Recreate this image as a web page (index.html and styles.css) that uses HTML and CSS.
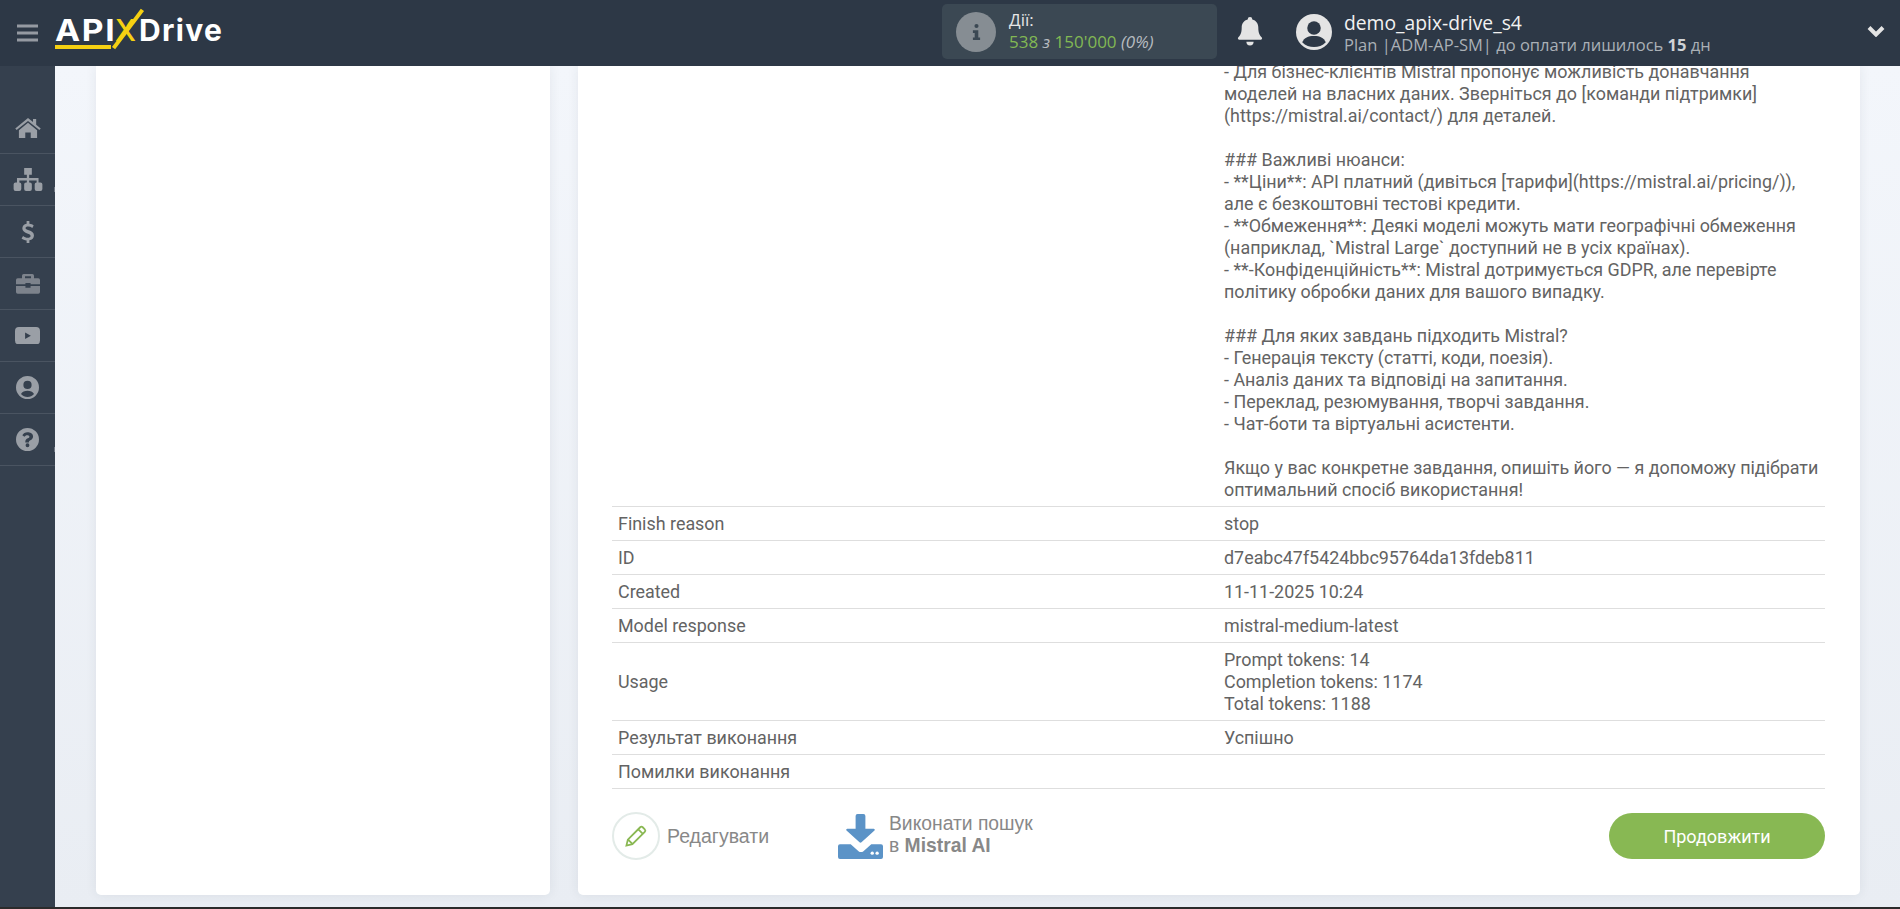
FILE: index.html
```html
<!DOCTYPE html>
<html lang="uk">
<head>
<meta charset="utf-8">
<title>ApiX-Drive</title>
<link rel="stylesheet" href="styles.css">
</head>
<body>
<header class="topbar">
  <div class="brand">
    <svg class="burger" viewBox="0 0 20 16"><path d="M0 0h20v2.800H0zM0 6.600h20v2.800H0zM0 13.200h20V16H0z"/></svg>
    <div class="logo"><span class="logo-api"><span class="logo-api-text">API</span></span><span class="logo-x">X</span><span class="logo-drive">Drive</span></div>
  </div>
  <div class="actions">
    <div class="actions-box">
      <span class="info-circle"><svg viewBox="0 0 12 20"><path d="M6 1a2.300 2.300 0 1 1 0 4.600A2.300 2.300 0 0 1 6 1zM2 8h6v8h2v3H2v-3h2v-5H2z"/></svg></span>
      <div class="actions-text">
        <div class="actions-title">Дії:</div>
        <div class="actions-count"><span class="green">538</span> <i>з</i> <span class="green">150'000</span> <i>(0%)</i></div>
      </div>
    </div>
    <svg class="bell" viewBox="0 0 24 28"><path d="M12 0a2.200 2.200 0 0 1 2.200 2.300C18 3.200 20 6.400 20 10c0 6 1.600 8 3.400 9.800.6.700.2 2.200-1 2.200H1.600c-1.200 0-1.600-1.500-1-2.200C2.400 18 4 16 4 10c0-3.600 2-6.800 5.800-7.700A2.200 2.200 0 0 1 12 0zM8.500 24h7a3.500 3.500 0 0 1-7 0z"/></svg>
  </div>
  <div class="user">
    <svg class="avatar" viewBox="0 0 32 32"><circle cx="16" cy="16" r="16" fill="#e4e4e4"/><circle cx="16" cy="12.500" r="6" fill="#2d3846"/><path d="M5.500 25c2-4 5-5.500 10.500-5.500S24.500 21 26.500 25c-3 3-6.500 4.300-10.500 4.300S8.500 28 5.500 25z" fill="#2d3846"/></svg>
    <div class="user-text">
      <div class="user-name">demo_apix-drive_s4</div>
      <div class="user-plan">Plan |ADM-AP-SM| до оплати лишилось <b>15</b> дн</div>
    </div>
    <svg class="chevron" viewBox="0 0 18 12"><path d="M2 2.500l7 7 7-7" fill="none" stroke="#e4e4e4" stroke-width="4"/></svg>
  </div>
</header>

<div class="frame">
  <nav class="sidebar">
    <a class="nav-item"><svg class="ic-home" viewBox="0 0 28 22"><path d="M14 0 0 11.500l1.500 1.800L14 3.200l12.500 10.100L28 11.500l-5-4.100V1h-3.500v3.500zM14 5.300 4 13.400V22h7v-6h6v6h7v-8.600z"/></svg></a>
    <a class="nav-item has-tick"><svg class="ic-org" viewBox="0 0 30 24"><path d="M11 0h8v7h-2.800v3.500H26V15h2a2 2 0 0 1 2 2v5a2 2 0 0 1-2 2h-4a2 2 0 0 1-2-2v-5a2 2 0 0 1 2-2V13h-7.800v2H17a2 2 0 0 1 2 2v5a2 2 0 0 1-2 2h-4a2 2 0 0 1-2-2v-5a2 2 0 0 1 2-2h.8v-2H6v2a2 2 0 0 1 2 2v5a2 2 0 0 1-2 2H2a2 2 0 0 1-2-2v-5a2 2 0 0 1 2-2h1.500v-4.500h10.300V7H11z"/></svg></a>
    <a class="nav-item"><svg class="ic-dollar" viewBox="0 0 14 24"><path d="M5.500 0h3v3c2 .2 3.600 1 4.700 1.800l-1.500 2.700C10.300 6.500 8.800 6 7.200 6 5.300 6 4.300 6.700 4.300 7.700c0 1.200 1.300 1.700 3.500 2.500 3.500 1.200 5.700 2.500 5.700 5.700 0 2.700-1.900 4.700-5 5.200V24h-3v-2.800c-2.200-.2-4.200-1-5.500-2.200l1.600-2.700c1.500 1.200 3.300 2 5 2 2 0 3.200-.8 3.200-2 0-1.300-1.200-1.800-3.700-2.700C2.700 12.200.8 10.800.8 8c0-2.500 1.800-4.500 4.700-5z"/></svg></a>
    <a class="nav-item dim"><svg class="ic-case" viewBox="0 0 28 24"><path d="M9 1h10a2 2 0 0 1 2 2v3h5a2 2 0 0 1 2 2v5H17v-1.500h-6V13H0V8a2 2 0 0 1 2-2h5V3a2 2 0 0 1 2-2zm1.500 2.500V6h7V3.500zM0 15h11v2h6v-2h11v7a2 2 0 0 1-2 2H2a2 2 0 0 1-2-2z"/></svg></a>
    <a class="nav-item"><svg class="ic-yt" viewBox="0 0 26 18"><path fill-rule="evenodd" d="M4 0h18a4 4 0 0 1 4 4v10a4 4 0 0 1-4 4H4a4 4 0 0 1-4-4V4a4 4 0 0 1 4-4zm6.500 5.500v7l6-3.500z"/></svg></a>
    <a class="nav-item"><svg class="ic-round" viewBox="0 0 24 24"><path fill-rule="evenodd" d="M12 0a12 12 0 1 1 0 24 12 12 0 0 1 0-24zm0 5a4.300 4.300 0 1 0 0 8.600A4.300 4.300 0 0 0 12 5zm0 10.500c-3 0-5.500 1-6.800 3.200C7 20.700 9.300 21.800 12 21.800s5-1.100 6.800-3.100c-1.300-2.200-3.800-3.200-6.800-3.200z"/></svg></a>
    <a class="nav-item has-tick"><svg class="ic-round" viewBox="0 0 24 24"><path fill-rule="evenodd" d="M12 0a12 12 0 1 1 0 24 12 12 0 0 1 0-24zm0 4.500c-2.500 0-4.300 1.100-5.400 3l2.200 1.700c.7-1 1.500-1.700 3-1.700 1.200 0 2.200.6 2.200 1.500 0 .8-.6 1.200-1.700 1.800-1.400.8-2.600 1.700-2.600 3.700v.5h3.800v-.4c0-.8.4-1.100 1.500-1.700 1.500-.9 2.800-2 2.800-4 0-3-3-4.400-6-4.400zM12 16a2 2 0 1 0 0 4 2 2 0 0 0 0-4z"/></svg></a>
  </nav>

  <main class="content">
    <aside class="panel-left"></aside>
    <section class="panel-right">
      <div class="result-table">
        <div class="row">
          <div class="cell-key"></div>
          <div class="cell-val">- Для бізнес-клієнтів Mistral пропонує можливість донавчання
моделей на власних даних. Зверніться до [команди підтримки]
(https://mistral.ai/contact/) для деталей.

### Важливі нюанси:
- **Ціни**: API платний (дивіться [тарифи](https://mistral.ai/pricing/)),
але є безкоштовні тестові кредити.
- **Обмеження**: Деякі моделі можуть мати географічні обмеження
(наприклад, `Mistral Large` доступний не в усіх країнах).
- **-Конфіденційність**: Mistral дотримується GDPR, але перевірте
політику обробки даних для вашого випадку.

### Для яких завдань підходить Mistral?
- Генерація тексту (статті, коди, поезія).
- Аналіз даних та відповіді на запитання.
- Переклад, резюмування, творчі завдання.
- Чат-боти та віртуальні асистенти.

Якщо у вас конкретне завдання, опишіть його — я допоможу підібрати
оптимальний спосіб використання!</div>
        </div>
        <div class="row"><div class="cell-key">Finish reason</div><div class="cell-val">stop</div></div>
        <div class="row"><div class="cell-key">ID</div><div class="cell-val">d7eabc47f5424bbc95764da13fdeb811</div></div>
        <div class="row"><div class="cell-key">Created</div><div class="cell-val">11-11-2025 10:24</div></div>
        <div class="row"><div class="cell-key">Model response</div><div class="cell-val">mistral-medium-latest</div></div>
        <div class="row"><div class="cell-key">Usage</div><div class="cell-val">Prompt tokens: 14
Completion tokens: 1174
Total tokens: 1188</div></div>
        <div class="row"><div class="cell-key">Результат виконання</div><div class="cell-val">Успішно</div></div>
        <div class="row"><div class="cell-key">Помилки виконання</div><div class="cell-val"></div></div>
      </div>
      <div class="footer-actions">
        <a class="edit-btn">
          <span class="edit-circle"><svg viewBox="0 0 20 20"><path d="M2 18l1.200-5L13.500 2.700a1.500 1.500 0 0 1 2.100 0l1.700 1.700a1.500 1.500 0 0 1 0 2.100L7 16.800zM12 4.500l3.500 3.500M3.400 13l3.600 3.600" fill="none" stroke="#8ab853" stroke-width="1.500"/></svg></span>
          <span>Редагувати</span>
        </a>
        <a class="run-btn">
          <svg viewBox="0 0 46 46"><path fill="#5b93c7" d="M18 2a2 2 0 0 1 2-2h6a2 2 0 0 1 2 2v13h8.500c1 0 1.500 1.200.8 1.900L24 29c-.6.600-1.500.600-2 0L8.700 16.900c-.7-.7-.2-1.900.8-1.900H18zM2 31h11l8 7c1.500 1.200 3.500 1.200 5 0l8-7h10a2 2 0 0 1 2 2v11a2 2 0 0 1-2 2H2a2 2 0 0 1-2-2V33a2 2 0 0 1 2-2z"/><circle cx="35" cy="40" r="1.700" fill="#fff"/><circle cx="40" cy="40" r="1.700" fill="#fff"/></svg>
          <span class="run-text">Виконати пошук<br>в <b>Mistral AI</b></span>
        </a>
        <a class="continue-btn">Продовжити</a>
      </div>
    </section>
  </main>
</div>
</body>
</html>
```
FILE: styles.css
```css
* { box-sizing: border-box; }
html, body { margin: 0; height: 100%; overflow: hidden; }
body {
  font-family: Roboto, "Liberation Sans", sans-serif;
  background: #2b2b2b;
  color: #636363;
  height: 909px;
  display: flex;
  flex-direction: column;
}
.topbar {
  height: 66px;
  flex: none;
  background: #2d3846;
  display: flex;
  align-items: center;
  position: relative;
  z-index: 2;
}
.brand { width: 942px; display: flex; align-items: center; padding-left: 17px; flex: none; }
.burger { width: 21px; height: 18px; fill: #959aa2; flex: none; }
.logo {
  margin-left: 17px;
  margin-top: -2px;
  font-family: Inter, "Open Sans", sans-serif;
  font-weight: 700;
  font-size: 30px;
  line-height: 30px;
  color: #fff;
  display: flex;
  align-items: flex-start;
  position: relative;
}
.logo-api {
  width: 56px;
  height: 34px;
  border-bottom: 4px solid #f5d012;
  white-space: nowrap;
}
.logo-api-text {
  display: inline-block;
  letter-spacing: 1.500px;
  transform: scaleX(1.120);
  transform-origin: left center;
}
.logo-x {
  color: #f5d012;
  font-weight: 500;
  width: 28px;
  padding-left: 4px;
  position: relative;
}
.logo-x::after {
  content: "";
  position: absolute;
  left: 14.500px;
  top: -10px;
  width: 4px;
  height: 48px;
  background: #f5d012;
  transform: rotate(37deg);
}
.logo-drive { letter-spacing: 1.300px; }

.actions { display: flex; align-items: center; flex: none; width: 354px; }
.actions-box {
  width: 275px;
  height: 55px;
  background: #3b4853;
  border-radius: 5px;
  display: flex;
  align-items: center;
  padding-left: 14px;
  flex: none;
  margin-top: -3px;
}
.info-circle {
  width: 40px; height: 40px; border-radius: 50%;
  background: #868d93;
  display: flex; align-items: center; justify-content: center;
  flex: none;
}
.info-circle svg { width: 11px; height: 18px; fill: #3b4853; }
.actions-text { margin-left: 13px; font-family: "Open Sans", sans-serif; margin-top: -1px; }
.actions-title { font-size: 17px; line-height: 22px; color: #e6e6e6; }
.actions-count { font-size: 17px; line-height: 22px; color: #b7bcc0; white-space: nowrap; }
.green { color: #82b854; }
.bell { width: 26px; height: 29px; fill: #e4e4e4; margin-left: 20px; flex: none; margin-top: -4px; }

.user { display: flex; align-items: center; flex: 1; }
.avatar { width: 36px; height: 36px; flex: none; margin-top: -3px; }
.user-text { margin-left: 12px; font-family: "Open Sans", sans-serif; margin-top: 1px; }
.user-name { font-size: 19.300px; line-height: 22px; color: #f2f2f2; white-space: nowrap; }
.user-plan { font-size: 16.500px; line-height: 22px; color: #aab0b6; white-space: nowrap; }
.user-plan b { color: #d0d3d6; }
.chevron { width: 18px; height: 12px; margin-left: auto; margin-right: 15px; margin-bottom: 4px; flex: none; }

.frame { flex: 1; display: flex; min-height: 0; margin-bottom: 2px; }
.sidebar {
  width: 55px;
  flex: none;
  background: #35404e;
  padding-top: 36px;
}
.nav-item {
  height: 52px;
  display: flex;
  align-items: center;
  justify-content: center;
  border-bottom: 1px solid #4a5461;
  position: relative;
}
.nav-item svg { fill: #9a9fa6; }
.nav-item.dim svg { fill: #7d838c; }
.has-tick::after {
  content: "";
  position: absolute;
  right: 0;
  top: 33px;
  width: 1px;
  height: 5px;
  background: #6e7682;
}
.ic-home { width: 26px; height: 20px; }
.ic-org { width: 30px; height: 23px; }
.ic-dollar { width: 14px; height: 22px; }
.ic-case { width: 24px; height: 21px; }
.ic-yt { width: 25px; height: 17.500px; }
.ic-round { width: 23px; height: 23px; }
.content {
  flex: 1;
  min-width: 0;
  background: linear-gradient(#f3f6fb, #e9edf3);
  display: flex;
  padding: 0 40px 12px 41px;
  gap: 28px;
  overflow: hidden;
}
.panel-left, .panel-right { box-shadow: 0 0 12px rgba(40, 50, 70, .08); }
.panel-left { width: 454px; flex: none; background: #fff; border-radius: 0 0 5px 5px; }
.panel-right {
  flex: 1;
  min-width: 0;
  background: #fff;
  border-radius: 0 0 5px 5px;
  padding: 0 35px 0 34px;
  display: flex;
  flex-direction: column;
  justify-content: flex-end;
}
.result-table { font-size: 17.900px; line-height: 22px; }
.row {
  display: flex;
  align-items: center;
  border-bottom: 1px solid #dedede;
  padding: 6px 0 5px;
  min-height: 34px;
}
.cell-key { width: 612px; flex: none; padding-left: 6px; }
.cell-val { flex: 1; white-space: pre-line; }
.footer-actions { display: flex; align-items: center; height: 106px; padding-bottom: 12px; flex: none; }
.edit-btn { display: flex; align-items: center; color: #888; font-size: 19.500px; font-family: "Liberation Sans", sans-serif; width: 226px; }
.edit-circle {
  width: 48px; height: 48px; border-radius: 50%;
  border: 2px solid #e3ebe8;
  display: flex; align-items: center; justify-content: center;
  margin-right: 7px; flex: none;
}
.edit-circle svg { width: 24px; height: 24px; }
.run-btn { display: flex; align-items: center; color: #888; font-family: "Liberation Sans", sans-serif; font-size: 19.300px; line-height: 22px; }
.run-btn svg { width: 45px; height: 45px; flex: none; margin-right: 6px; }
.run-text { padding-bottom: 2px; }
.continue-btn {
  margin-left: auto;
  width: 216px; height: 46px;
  background: #88b853; border-radius: 23px;
  color: #fff; font-size: 18px;
  display: flex; align-items: center; justify-content: center;
}
```
